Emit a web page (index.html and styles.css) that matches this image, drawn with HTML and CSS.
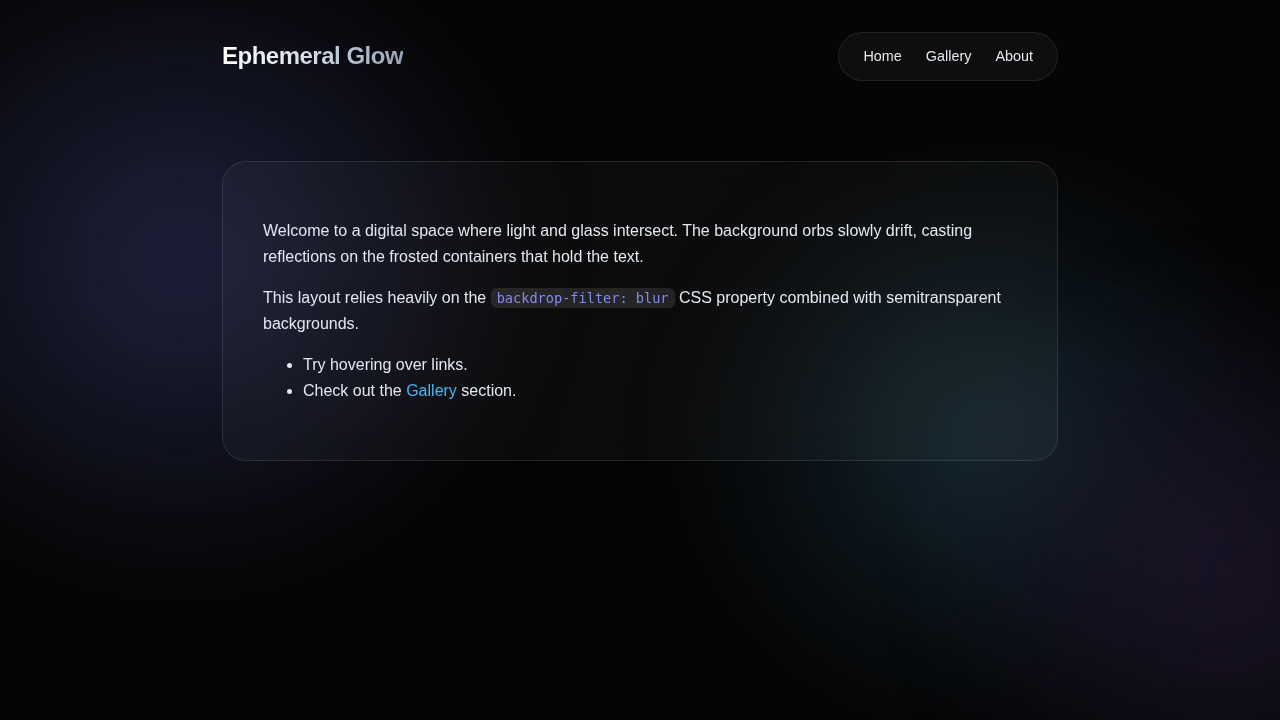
FILE: index.html
```html
<!DOCTYPE html>
<html lang="en">
<head>
<meta charset="utf-8">
<title>Ephemeral Glow</title>
<link rel="stylesheet" href="styles.css">
</head>
<body>
<div class="orbs" aria-hidden="true">
  <div class="orb orb-blue"></div>
  <div class="orb orb-teal"></div>
  <div class="orb orb-purple"></div>
</div>
<div class="page">
  <header class="header">
    <div class="logo">Ephemeral Glow</div>
    <nav class="nav">
      <a href="#">Home</a>
      <a href="#">Gallery</a>
      <a href="#">About</a>
    </nav>
  </header>
  <main class="card">
    <p>Welcome to a digital space where light and glass intersect. The background orbs slowly drift, casting reflections on the frosted containers that hold the text.</p>
    <p>This layout relies heavily on the <code>backdrop-filter: blur</code> CSS property combined with semitransparent backgrounds.</p>
    <ul>
      <li>Try hovering over links.</li>
      <li>Check out the <a class="link" href="#">Gallery</a> section.</li>
    </ul>
  </main>
</div>
</body>
</html>
```

FILE: styles.css
```css
html, body {
  margin: 0;
  padding: 0;
}
body {
  background: #050505;
  color: #e2e8f0;
  font-family: "Liberation Sans", Arial, sans-serif;
  font-size: 16px;
  line-height: 1.6;
  min-height: 720px;
  overflow: hidden;
}
.orbs {
  position: fixed;
  inset: 0;
  z-index: 0;
  pointer-events: none;
}
.orb {
  position: absolute;
  border-radius: 50%;
  filter: blur(40px);
}
.orb-blue {
  left: -180px;
  top: -80px;
  width: 720px;
  height: 680px;
  background: radial-gradient(closest-side, rgba(40, 44, 80, 0.75), rgba(30, 33, 60, 0.45) 55%, rgba(20, 22, 40, 0) 100%);
}
.orb-teal {
  left: 680px;
  top: 150px;
  width: 620px;
  height: 580px;
  background: radial-gradient(closest-side, rgba(28, 52, 62, 0.8), rgba(18, 36, 48, 0.45) 55%, rgba(10, 20, 30, 0) 100%);
}
.orb-purple {
  left: 940px;
  top: 280px;
  width: 560px;
  height: 580px;
  background: radial-gradient(closest-side, rgba(34, 24, 48, 0.8), rgba(26, 20, 40, 0.45) 55%, rgba(20, 14, 30, 0) 100%);
}
.page {
  position: relative;
  z-index: 1;
  max-width: 836px;
  margin: 0 auto;
}
.header {
  display: flex;
  justify-content: space-between;
  align-items: center;
  padding: 32px 0 0;
}
.logo {
  font-size: 24px;
  font-weight: 700;
  letter-spacing: -0.5px;
  line-height: 1.2;
  background: linear-gradient(90deg, #ffffff 0%, #e2e8f0 35%, #94a3b8 100%);
  -webkit-background-clip: text;
  background-clip: text;
  color: transparent;
}
.nav {
  display: flex;
  gap: 24px;
  padding: 12px 24px;
  line-height: 23px;
  border: 1px solid rgba(255, 255, 255, 0.08);
  border-radius: 999px;
  background: rgba(255, 255, 255, 0.04);
  backdrop-filter: blur(12px);
}
.nav a {
  color: #e2e8f0;
  text-decoration: none;
  font-size: 14.4px;
}
.card {
  display: block;
  margin-top: 80px;
  padding: 40px;
  border: 1px solid rgba(255, 255, 255, 0.1);
  border-radius: 24px;
  background: rgba(255, 255, 255, 0.03);
  backdrop-filter: blur(16px);
}
.card p {
  margin: 16px 0;
}
.card ul {
  margin: 16px 0;
  padding-left: 40px;
}
code {
  font-family: "DejaVu Sans Mono", "Liberation Mono", monospace;
  font-size: 13.6px;
  color: #818cf8;
  background: rgba(255, 255, 255, 0.1);
  padding: 2px 6px;
  border-radius: 6px;
}
.link {
  color: #38bdf8;
  text-decoration: none;
}
```
